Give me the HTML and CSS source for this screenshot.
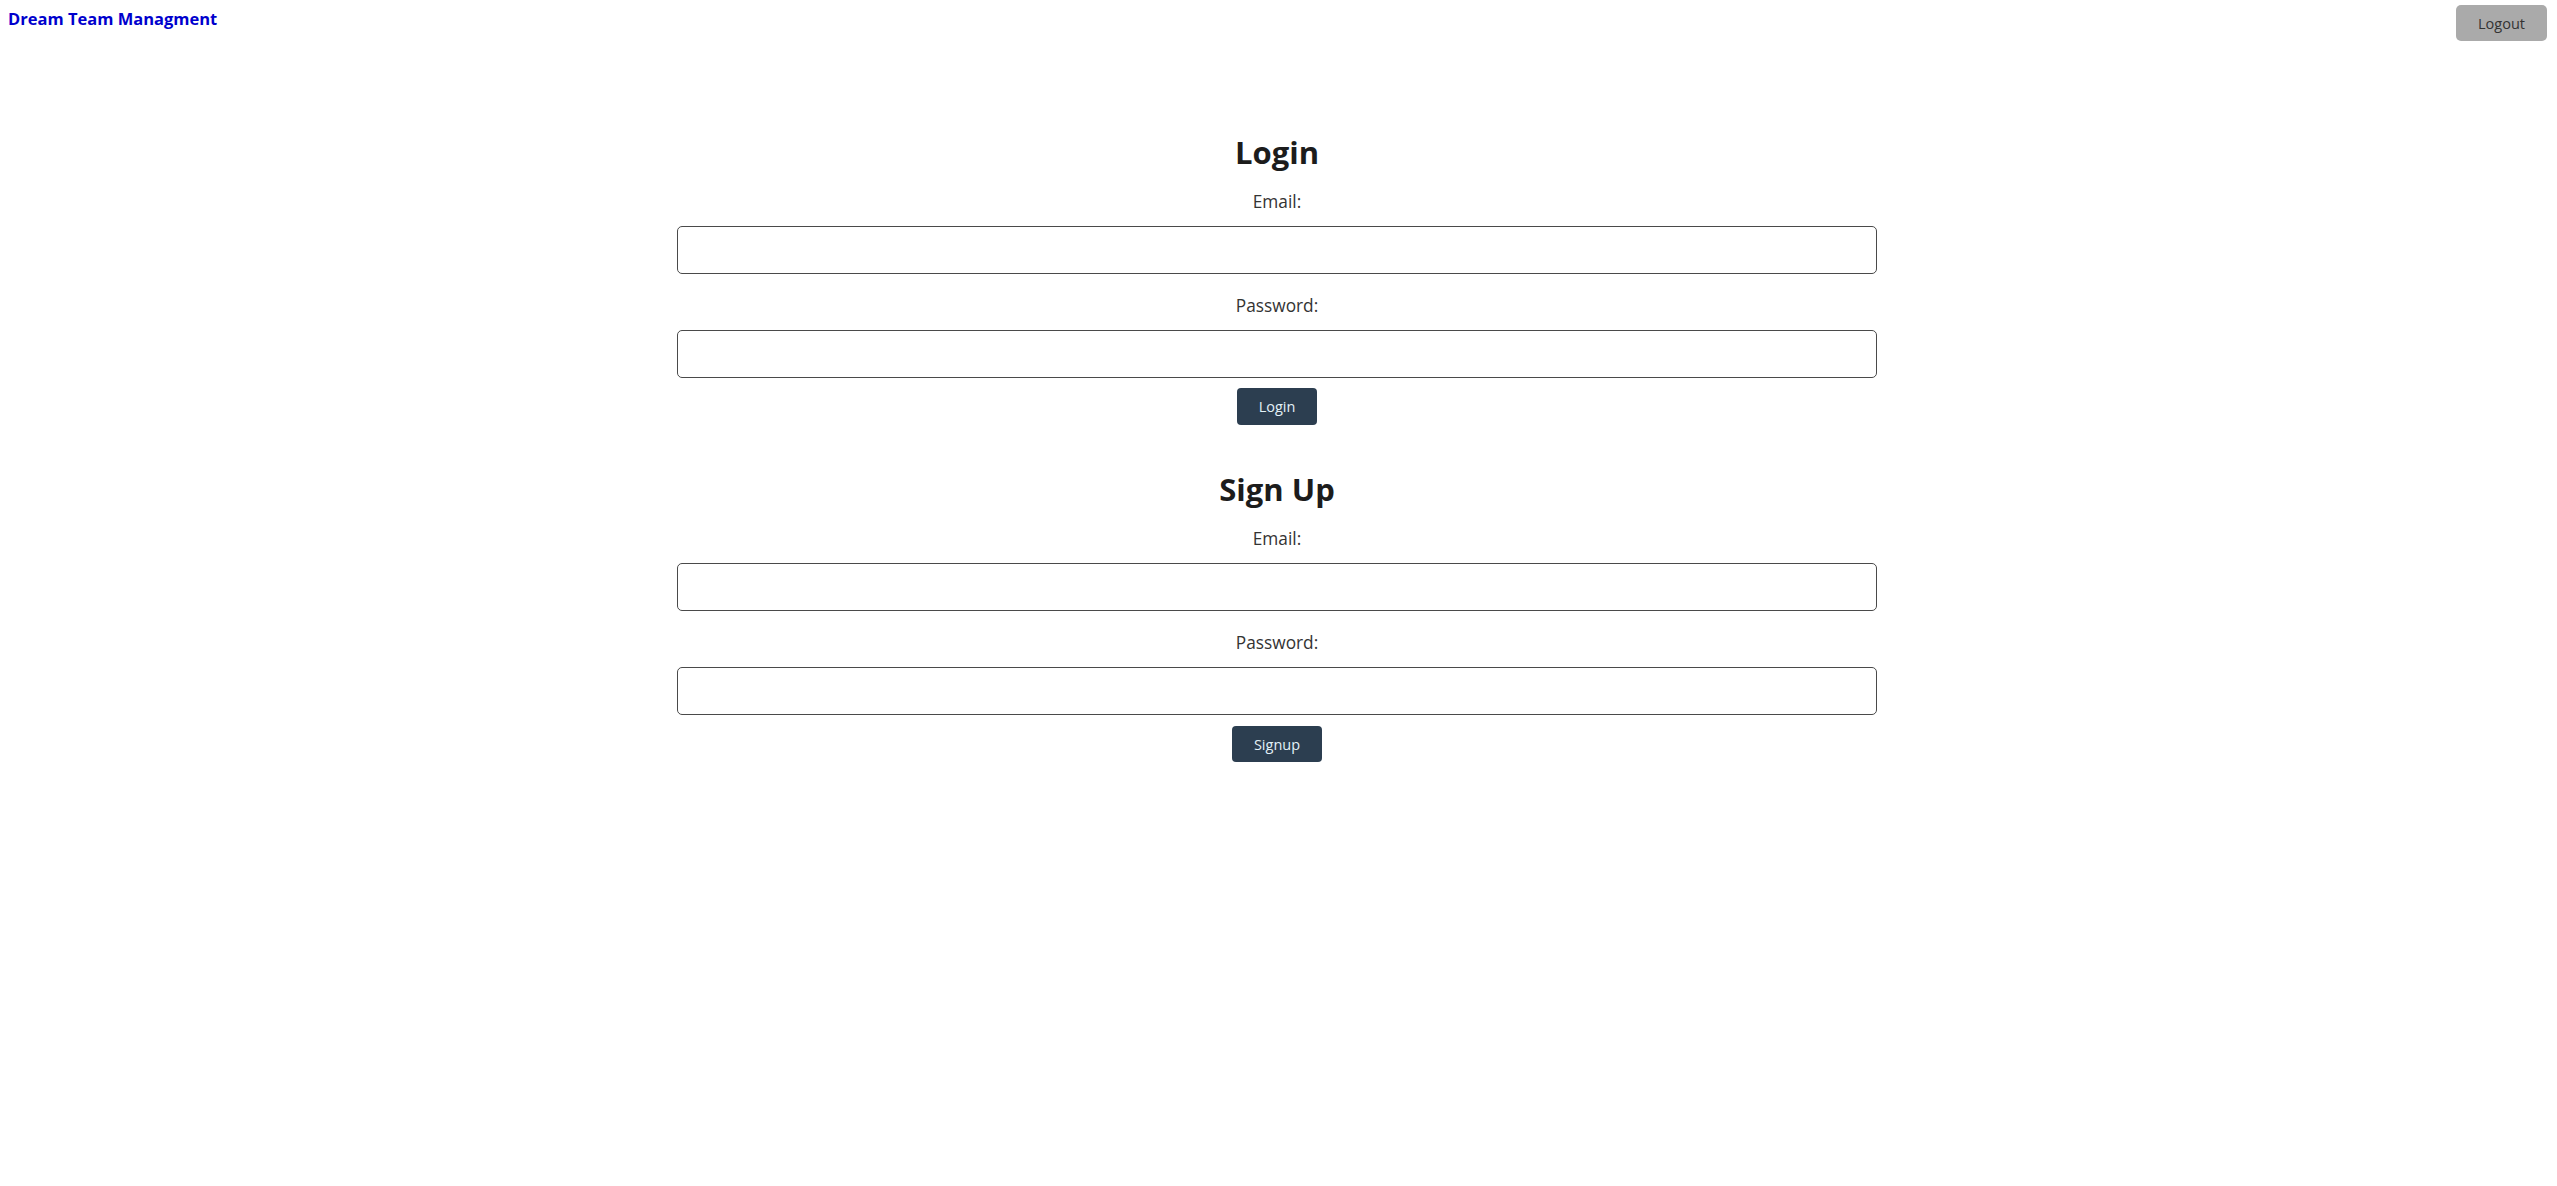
FILE: index.html
```html
<!DOCTYPE html>
<html lang="en">
<head>
<meta charset="utf-8">
<title>Dream Team Managment</title>
<link rel="stylesheet" href="styles.css">
</head>
<body>
<header class="topbar">
  <a class="brand" href="#">Dream Team Managment</a>
  <button class="btn-logout" type="button">Logout</button>
</header>
<main class="main">
  <form class="auth-form">
    <h2 class="auth-title">Login</h2>
    <label class="auth-label" for="login-email">Email:</label>
    <input class="auth-input" id="login-email" type="email">
    <label class="auth-label label-gap" for="login-pass">Password:</label>
    <input class="auth-input" id="login-pass" type="password">
    <button class="btn-primary btn-login" type="button">Login</button>
  </form>
  <form class="auth-form form-signup">
    <h2 class="auth-title">Sign Up</h2>
    <label class="auth-label" for="signup-email">Email:</label>
    <input class="auth-input" id="signup-email" type="email">
    <label class="auth-label label-gap" for="signup-pass">Password:</label>
    <input class="auth-input" id="signup-pass" type="password">
    <button class="btn-primary btn-signup" type="button">Signup</button>
  </form>
</main>
</body>
</html>
```

FILE: styles.css
```css
* {
  box-sizing: border-box;
}

html, body {
  margin: 0;
  padding: 0;
  background: #ffffff;
}

body {
  font-family: "Open Sans", "Noto Sans", "Liberation Sans", sans-serif;
  color: #333333;
}

.topbar {
  display: flex;
  justify-content: space-between;
  align-items: flex-start;
  padding: 5px 10px 0 8px;
}

.brand {
  margin-top: 2px;
  font-size: 16.5px;
  line-height: 24px;
  font-weight: 700;
  color: #0000cd;
  text-decoration: none;
}

.btn-logout {
  height: 36px;
  min-width: 91px;
  padding: 0 20px;
  border: none;
  border-radius: 5px;
  background: #aaaaaa;
  color: #333333;
  font-family: inherit;
  font-size: 14.5px;
}

.main {
  display: flex;
  flex-direction: column;
  align-items: center;
  margin-top: 91px;
  padding-right: 3px;
}

.auth-form {
  display: flex;
  flex-direction: column;
  align-items: center;
  width: 1200px;
}

.form-signup {
  margin-top: 44px;
}

.auth-title {
  margin: 0 0 18px;
  font-size: 31px;
  line-height: 40px;
  font-weight: 700;
  color: #1c1c1c;
}

.auth-label {
  font-size: 17.3px;
  line-height: 24px;
  color: #333333;
  margin-bottom: 12px;
}

.label-gap {
  margin-top: 20px;
}

.auth-input {
  display: block;
  width: 1200px;
  height: 48px;
  border: 1px solid #4a4a4a;
  border-radius: 5px;
  background: #ffffff;
  font-family: inherit;
  font-size: 16px;
  padding: 0 10px;
}

.btn-primary {
  margin-top: 10px;
  padding: 0 20px;
  border: none;
  border-radius: 4px;
  background: #2c3e50;
  color: #e3f1f7;
  font-family: inherit;
  font-size: 14.5px;
}

.btn-login {
  height: 37px;
  min-width: 80px;
}

.btn-signup {
  height: 36px;
  min-width: 90px;
  margin-top: 11px;
}
```
